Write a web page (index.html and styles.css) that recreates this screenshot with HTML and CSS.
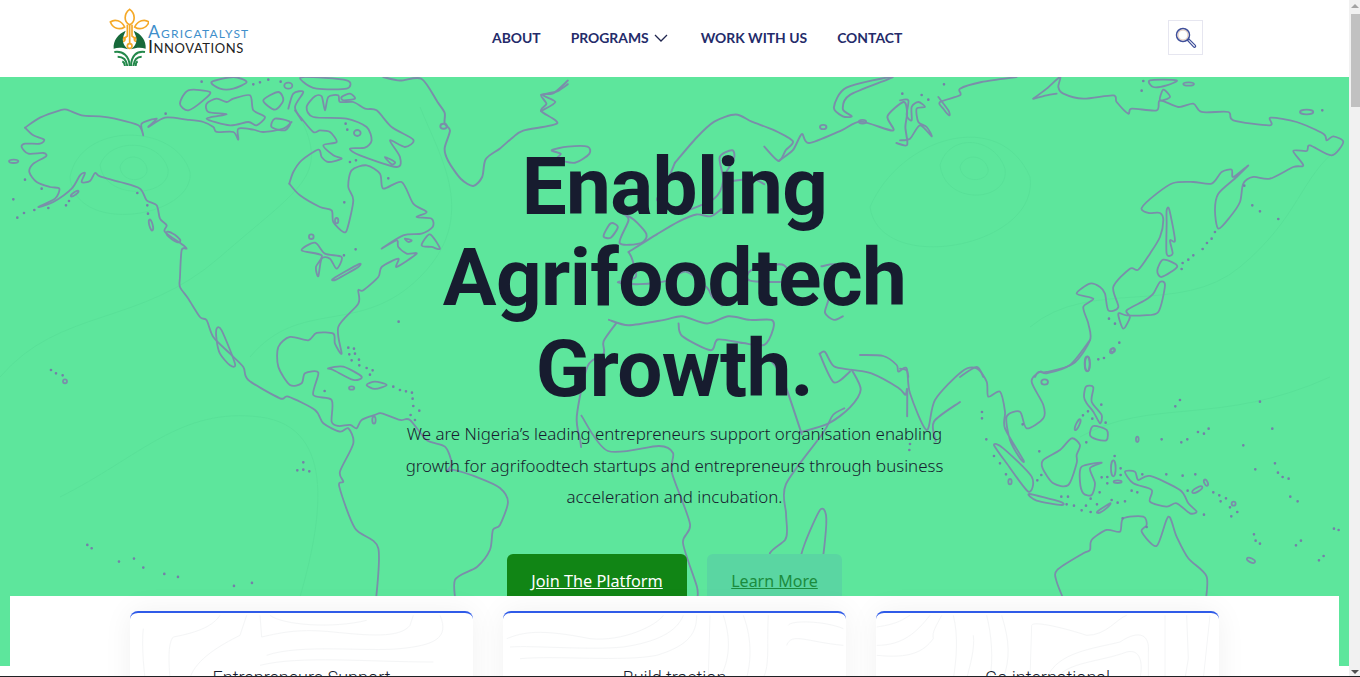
FILE: index.html
```html
<!DOCTYPE html>
<html lang="en">
<head>
<meta charset="UTF-8">
<meta name="viewport" content="width=device-width, initial-scale=1.0">
<title>Agricatalyst Innovations</title>
<link rel="stylesheet" href="styles.css">
</head>
<body>
<div class="window">
<div class="page">

<header class="site-header">
    <a class="logo" href="#">
        <svg class="logo-icon" viewBox="58 28 120 174" width="40" height="58">
            <g fill="none" stroke="#f5a928" stroke-width="5">
                <path d="M120 32C138 45 138 70 120 78C102 70 102 45 120 32Z"/>
                <path d="M62 70C75 60 95 65 105 85C90 95 70 90 62 70Z"/>
                <path d="M178 70C165 60 145 65 135 85C150 95 170 90 178 70Z"/>
                <path d="M113 78V112L100 122M127 78V112L140 122M120 78V135"/>
                <circle cx="120" cy="142" r="7"/>
                <circle cx="100" cy="122" r="6"/>
                <circle cx="140" cy="122" r="6"/>
            </g>
            <path fill="#17693a" d="M72 150C70 125 85 106 108 96L100 116C97 131 105 145 116 152C103 147 86 145 72 150Z"/>
            <path fill="#17693a" d="M168 150C170 125 155 106 132 96L140 116C143 131 135 145 124 152C137 147 154 145 168 150Z"/>
            <g fill="none" stroke="#23884a" stroke-width="6">
                <path d="M74 160C100 156 119 172 120 202"/>
                <path d="M84 174C102 174 111 186 113 202"/>
                <path d="M98 188C103 190 105 196 106 202"/>
                <path d="M166 160C140 156 125 172 124 202"/>
                <path d="M156 174C140 174 133 186 131 202"/>
                <path d="M144 188C139 190 138 196 138 202"/>
            </g>
        </svg>
        <span class="logo-text">
            <span class="logo-top">Agricatalyst</span>
            <span class="logo-bottom">Innovations</span>
        </span>
    </a>
    <nav class="main-nav">
        <a href="#">ABOUT</a>
        <a href="#" class="has-menu">PROGRAMS
            <svg viewBox="0 0 14 8" width="14" height="8"><path d="M1 1L7 7L13 1" fill="none" stroke="#20264f" stroke-width="1.3"/></svg>
        </a>
        <a href="#">WORK WITH US</a>
        <a href="#">CONTACT</a>
    </nav>
    <button class="search-btn" aria-label="Search">
        <svg viewBox="0 0 22 22" width="22" height="22">
            <circle cx="8" cy="8" r="6.5" fill="none" stroke="#3f4f9a" stroke-width="1.5"/>
            <circle cx="8" cy="8" r="5" fill="none" stroke="#d9b9a8" stroke-width=".8"/>
            <path d="M12.6 13.4L14 12L20.4 18.4C21 19 20.6 19.6 20.2 20C19.8 20.4 19.2 20.6 18.8 20.2Z" fill="#fff" stroke="#3f4f9a" stroke-width="1.2"/>
        </svg>
    </button>
</header>

<section class="hero">
    <svg class="hero-map" viewBox="0 0 1349 589" width="1349" height="589">
        <!-- faint contours -->
        <g class="contours">
            <path d="M120 90C125 75 145 78 147 92C148 105 122 108 120 90Z"/>
            <path d="M100 88C110 60 160 62 168 92C172 120 105 125 100 88Z"/>
            <path d="M70 100C80 45 175 45 190 95C195 140 75 160 70 100Z"/>
            <path d="M960 90C965 75 985 78 988 92C990 105 962 108 960 90Z"/>
            <path d="M940 88C950 55 995 60 1005 92C1010 125 945 130 940 88Z"/>
            <path d="M870 130C900 60 1000 30 1030 100C1040 170 880 200 870 130Z"/>
            <path d="M0 300C60 230 140 250 220 180S330 100 300 40"/>
            <path d="M250 280C300 220 360 260 420 200S440 80 420 30"/>
            <path d="M60 420C140 380 180 330 260 340S320 450 300 520"/>
            <path d="M1030 250C1090 200 1180 240 1240 190S1300 100 1340 70"/>
            <path d="M1080 360C1150 320 1220 350 1330 300"/>
        </g>

        <g class="coast" transform="scale(.3333)">
            <!-- north america -->
            <path d="M75 152L120 122L180 100L200 98L245 115L300 118L345 125L415 145L430 175L425 140L470 125L445 150L495 122L560 128L610 135L640 150L650 165L700 165L715 188L715 155L760 158L790 165L850 155L875 135"/>
            <path d="M75 152L100 175L132 188L120 200L75 200L65 210L85 230L130 228L138 238L100 260L88 285L110 315L150 330L178 335L165 365L115 390L160 375L215 335L240 295L255 288L245 315L270 312L285 288L300 298L360 315L420 335L440 370L470 385L480 425L500 445L495 465L550 505L560 515L545 520L540 600L540 630L565 665L600 720L620 730L640 780L690 830L730 870L745 909L840 964L865 959L945 999L970 1039L1020 1064L1045 1054L1060 1099L1020 1184L1030 1214L1018 1229L1065 1354L1135 1414L1125 1600"/>
            <path d="M650 755L665 760L705 860L690 865L660 830L650 790Z"/>
            <path d="M868 320L900 355L960 390L995 400L1000 435L1030 465L1042 455L1060 370L1045 330L1055 280L1100 265L1140 290L1150 335L1205 315L1240 380L1280 405L1250 420L1295 425L1298 450L1265 470L1210 475L1145 515L1190 490L1195 510L1220 530L1250 530L1190 570L1195 545L1145 570L1135 600L1090 640L1075 640L1075 680L1015 750L1025 830L1005 800L1000 770L950 768L925 790L870 780L835 810L835 869L870 924L905 919L915 889L955 887L940 954L995 969L995 1034L1015 1047L1050 1044L1070 1054L1085 1029L1125 1014L1145 1009L1200 1029L1230 1029L1280 1089L1335 1109L1355 1159L1340 1184L1360 1179L1440 1204L1500 1233L1524 1275L1500 1344L1479 1359L1470 1419L1431 1470L1365 1509L1371 1600"/>
            <path d="M868 320L880 285L905 250L955 218L965 240L985 255L1025 245L1000 235L970 205L1010 195L990 165L960 160L940 165L905 125L885 100"/>
            <path d="M905 520L945 497L975 530L1025 540L1010 575L990 545L965 545L955 598L948 570L965 535Z"/>
            <path d="M1000 605L1075 562L1075 570L1010 607Z"/>
            <path d="M920 90L945 58L965 58L975 100L985 60L1015 55L1020 75L1060 75L1095 95L1130 100L1175 150L1240 188L1215 210L1170 190L1200 240L1190 270L1080 235L1050 215L1095 212L1115 190L1100 150L1040 125L940 120Z"/>
            <path d="M620 80L650 65L680 75L700 65L750 55L760 100L795 120L770 145L745 135L690 145L620 125L680 112L625 105Z"/>
            <path d="M540 80L565 40L630 45L610 70L565 100Z"/>
            <path d="M790 70L835 45L850 70L825 98Z"/>
            <path d="M865 95L880 50L910 45L885 90L905 130"/>
            <path d="M815 150L825 125L870 135L855 160Z"/>
            <path d="M635 15L700 0L740 15L700 35L660 35Z"/>
            <path d="M910 0L1040 10L1040 35L950 35L910 15Z"/>
            <path d="M1025 60L1050 50L1065 65L1030 70Z"/>
            <path d="M1155 240L1185 255L1175 262Z"/>
            <path d="M1215 485L1235 490L1225 495Z"/>
            <path d="M1265 505L1290 472L1320 515L1295 510Z"/>
            <path d="M985 874L1030 869L1085 899L1060 909L1000 879Z"/>
            <path d="M1100 924L1125 914L1160 924L1125 936Z"/>
            <ellipse cx="41" cy="253" rx="14" ry="5"/>
            <ellipse cx="224" cy="350" rx="14" ry="4" transform="rotate(-35 224 350)"/>
            <ellipse cx="453" cy="444" rx="5" ry="17" transform="rotate(-15 453 444)"/>
            <ellipse cx="520" cy="480" rx="25" ry="8" transform="rotate(35 520 480)"/>
            <ellipse cx="1010" cy="431" rx="5" ry="8"/>
            <circle cx="934" cy="479" r="7"/>
            <ellipse cx="1072" cy="168" rx="10" ry="9"/>
            <ellipse cx="865" cy="26" rx="12" ry="9"/>
            <ellipse cx="1055" cy="933" rx="8" ry="5"/>
            <ellipse cx="1122" cy="1029" rx="5" ry="11"/>
            <circle cx="195" cy="913" r="6"/>
        </g>

        <g class="coast" transform="translate(400 0) scale(.35714)">
            <!-- greenland, europe, north africa -->
            <path d="M-47 0L0 10L60 5L105 70L125 100L125 130L140 150L125 200L135 235L170 285L205 305L230 280L240 230L280 200L315 170L345 150L440 130L395 95L410 75L395 50L430 45L470 10"/>
            <ellipse cx="122" cy="138" rx="9" ry="7"/>
            <path d="M425 205L470 195L525 195L530 215L490 240L440 230L450 215Z"/>
            <path d="M770 240L830 170L880 125L940 105L985 125L1050 150L1100 180L1080 205L1060 235L1020 195"/>
            <path d="M770 240L740 310L720 345L770 370L800 375L880 340L905 290L895 225L930 205L935 230L905 290L985 285L1020 300"/>
            <path d="M1060 235L1100 205L1125 160L1145 185L1235 150L1290 125L1380 150L1365 110L1410 70L1420 100L1415 140L1420 190L1390 185"/>
            <path d="M1240 110L1215 85L1250 30L1380 0L1260 50L1240 90L1265 110Z"/>
            <ellipse cx="1185" cy="140" rx="9" ry="6"/>
            <ellipse cx="1295" cy="125" rx="10" ry="5"/>
            <path d="M395 95L435 70L400 50L440 40L470 20"/>
            <path d="M570 445L590 410L610 420L590 450Z"/>
            <path d="M615 465L640 400L620 380L655 400L690 440L675 465Z"/>
            <path d="M640 490L720 440L780 405L830 385L870 390L900 370"/>
            <path d="M640 490L650 510L660 560L610 575L670 580L750 570L800 545L860 590L880 620L945 620L900 640"/>
            <path d="M985 540L1070 525L1090 570L980 570Z"/>
            <path d="M1180 530L1220 525L1195 560L1200 620L1190 660L1215 680L1240 670"/>
            <path d="M585 680L640 695L740 680L790 670L860 690L920 670L980 680L1040 680L1045 705L1020 750L960 745L890 735L870 765L790 725L780 690"/>
            <path d="M605 690L570 740L570 775L525 810L495 950L505 1020L507 1036"/>
            <path d="M1175 775L1190 770L1215 810L1265 820L1320 830L1395 870L1415 890L1420 875L1420 950"/>
            <path d="M1175 775L1215 855L1260 825"/>
            <path d="M1120 995L1200 970L1260 925L1290 875L1265 820"/>
            <path d="M1035 790L1070 840L1120 985L1125 1000"/>
            <path d="M1500 1020L1495 965L1568 910"/>
        </g>

        <g class="coast-plain">
            <!-- africa south of the heading -->
            <path d="M581 338L608 374L659 369L673 376L672 396L690 447L683 466L697 510L697 523"/>
            <path d="M845 331L833 338L823 356L786 407L786 436L787 453L785 463L770 476L772 491L760 506L758 523"/>
            <path d="M820 433L805 466L800 486L805 503L820 493L825 463L826 438Z"/>
        </g>

        <g class="coast" transform="translate(900 0) scale(.3333)">
            <!-- asia -->
            <path d="M0 70L25 70L20 115L35 130L35 90L55 75L75 90L50 95L55 135L80 150L95 178L60 145L30 185L0 190"/>
            <path d="M115 60L145 100L148 115L130 95L120 75L180 55L180 35L245 15L350 0"/>
            <path d="M400 65L440 35L480 0L475 30L490 50L550 65L640 55L650 75L685 110L695 95L770 100L780 70L835 90L880 80L905 105L985 105L1000 130L1110 145L1112 122L1190 135L1270 170L1280 190L1300 178L1330 195L1295 235L1230 205L1220 222L1180 222L1210 265L1180 270L1110 305L1060 300L1030 320L1020 375L990 420L955 455L945 400L955 350L1010 300L1045 265L1000 300L995 278L965 285L935 320L880 315L820 318L770 350L725 393L745 408L780 408L790 430L780 480L750 530L715 578L690 575L640 630L655 690L625 700L615 650L600 630L570 620L530 650L580 665L550 690L565 740L570 790L520 860L440 885L415 885L405 900"/>
            <path d="M400 65L440 55L470 50"/>
            <path d="M800 400L808 398L825 490L810 490L818 530L800 530L800 440Z"/>
            <path d="M790 548L832 568L785 600L772 580Z"/>
            <path d="M780 615L795 625L775 705L730 715L680 715L655 710L670 755L690 720L680 700L735 670L760 650Z"/>
            <path d="M750 10L830 10L800 25L760 30Z"/>
            <path d="M780 70L790 38L810 60Z"/>
            <ellipse cx="1220" cy="105" rx="20" ry="7"/>
            <ellipse cx="866" cy="21" rx="16" ry="5"/>
            <ellipse cx="562" cy="860" rx="8" ry="22"/>
            <ellipse cx="638" cy="820" rx="7" ry="5"/>
            <path d="M180 900L230 870L250 900"/>
            <path d="M0 875L20 880L25 900"/>
        </g>

        <g class="coast" transform="translate(860 263) scale(.3333)">
            <!-- south east asia and australia -->
            <path d="M0 45L70 48L110 75L115 95L140 85L150 160L200 270L225 180L305 95L350 85L380 125L385 170L420 155L435 215L435 265L490 360L480 355L450 300L440 230L480 215L500 265L550 235L550 195L515 125L540 95L560 100L630 75L690 0"/>
            <path d="M402 315L430 325L515 410L505 455L440 370Z"/>
            <path d="M508 462L600 485L605 495L530 482Z"/>
            <path d="M635 295L660 315L650 345L650 370L625 435L580 430L548 385L550 360L600 330Z"/>
            <path d="M665 380L725 368L690 385L705 430L695 465L670 460L660 425Z"/>
            <path d="M678 140L700 142L695 185L725 225L720 250L700 215L680 190L672 170Z"/>
            <path d="M700 258L740 270L740 300L710 298L690 285Z"/>
            <path d="M795 395L825 395L835 420L870 408L960 450L985 490L1010 515L990 520L950 490L920 500L870 485L875 450L820 430Z"/>
            <path d="M620 800L590 725L592 690L670 640L690 630L695 600L740 570L780 575L790 535L850 530L860 555L845 575L890 618L925 530L950 590L985 655L1040 710L1035 800"/>
            <path d="M712 515L750 490L745 500L720 518Z"/>
            <ellipse cx="554" cy="126" rx="10" ry="8"/>
            <ellipse cx="682" cy="72" rx="7" ry="22"/>
            <ellipse cx="653" cy="254" rx="5" ry="18" transform="rotate(25 653 254)"/>
            <ellipse cx="760" cy="385" rx="7" ry="24"/>
            <ellipse cx="773" cy="425" rx="12" ry="4"/>
            <ellipse cx="450" cy="425" rx="5" ry="8"/>
            <ellipse cx="1012" cy="449" rx="17" ry="6" transform="rotate(-30 1012 449)"/>
            <ellipse cx="1038" cy="428" rx="5" ry="10" transform="rotate(-25 1038 428)"/>
            <ellipse cx="1173" cy="661" rx="13" ry="6" transform="rotate(25 1173 661)"/>
            <ellipse cx="832" cy="298" rx="4" ry="8"/>
            <ellipse cx="1121" cy="491" rx="6" ry="6"/>
            <ellipse cx="757" cy="32" rx="5" ry="9" transform="rotate(35 757 32)"/>
        </g>

        <!-- island dots -->
        <g class="dots" transform="scale(.3333)">
            <path d="M497 110h0M75 308h0M125 335h0M40 367h0M52 422h0M72 408h0M103 399h0M145 393h0M198 385h0M207 372h0M412 348h0M442 385h0M444 410h0M1165 304h0M1067 517h0M1032 535h0M1196 734h0M1037 140h0M1042 158h0M1050 255h0M1068 250h0M1033 376h0M605 14h0M760 22h0M780 16h0M805 8h0M842 14h0"/>
            <path d="M1045 812h0M1062 815h0M1048 832h0M1065 830h0M1055 850h0M1077 848h0M1078 865h0M1100 873h0M1118 880h0M1110 893h0"/>
            <path d="M153 879h0M168 889h0M188 895h0M1180 929h0M1200 939h0M1218 943h0M1236 947h0M1238 965h0M1240 987h0M1258 1001h0M1232 1014h0M1245 1029h0M974 942h0M910 1156h0M892 1180h0M910 1178h0M928 1183h0"/>
            <path d="M262 1404h0M275 1414h0M357 1454h0M402 1445h0M430 1472h0M493 1491h0M534 1500h0M702 1527h0M756 1518h0"/>
        </g>
        <g class="dots" transform="translate(900 0) scale(.3333)">
            <path d="M132 22h0M65 54h0M85 68h0M7 50h0M730 12h0M725 41h0M1267 100h0M1057 385h0M1080 403h0M1135 426h0M945 465h0M935 485h0M921 498h0M908 516h0M880 535h0M865 548h0M848 558h0M845 576h0M1033 326h0M627 725h0M645 740h0M658 797h0M612 843h0M595 847h0"/>
        </g>
        <g class="dots" transform="translate(860 263) scale(.3333)">
            <path d="M366 216h0M366 235h0M379 298h0M402 348h0M420 370h0M438 403h0M488 253h0M538 334h0M544 405h0M532 421h0M150 312h0M148 330h0M724 194h0M684 214h0M669 226h0M697 236h0M737 248h0M679 307h0M764 348h0M782 385h0M782 405h0M847 403h0M919 403h0M968 407h0M1006 403h0M725 412h0M742 411h0M742 430h0M719 457h0M692 476h0M604 470h0M624 470h0M620 493h0M642 497h0M678 497h0M665 511h0M692 516h0M711 493h0M755 480h0M773 488h0M795 484h0M815 452h0M832 457h0M983 452h0M1060 457h0M1078 466h0M1098 475h0M1082 484h0M1110 502h0M1132 516h0M1114 529h0M1032 524h0M860 561h0M788 535h0M960 180h0M946 199h0M1200 185h0M1237 266h0M1046 266h0M1032 281h0M1014 276h0M982 298h0M964 307h0M905 298h0M1150 316h0M1186 388h0M1245 370h0M1254 398h0M1268 411h0M1286 416h0M1291 470h0M1313 484h0M1182 583h0M1187 602h0M1200 611h0M1308 616h0M1323 602h0M1391 648h0M1377 661h0M1422 566h0M1436 570h0"/>
        </g>
    </svg>

    <div class="hero-inner">
        <h1>Enabling<br>Agrifoodtech<br>Growth.</h1>
        <p>We are Nigeria’s leading entrepreneurs support organisation enabling growth for agrifoodtech startups and entrepreneurs through business acceleration and incubation.</p>
        <div class="hero-btns">
            <a class="btn btn-join" href="#">Join The Platform</a>
            <a class="btn btn-learn" href="#">Learn More</a>
        </div>
    </div>
</section>

<section class="cards-panel">
    <div class="card">
        <svg class="card-lines" viewBox="390 243 1029 300" preserveAspectRatio="none">
            <path d="M430 290C425 330 430 400 435 437"/>
            <path d="M510 437C505 380 505 330 520 315C600 300 640 280 660 250"/>
            <path d="M570 437C590 380 660 340 720 310L740 250"/>
            <path d="M780 250L785 315C850 300 900 290 1000 300C1100 310 1200 320 1230 280L1240 250"/>
            <path d="M810 250C850 280 1000 290 1100 265"/>
            <path d="M800 370C900 335 1100 360 1200 350C1300 340 1350 320 1320 250"/>
            <path d="M780 400C900 370 1100 390 1300 390"/>
        </svg>
        <h3>Entrepreneurs Support</h3>
    </div>
    <div class="card">
        <svg class="card-lines" viewBox="39 243 1029 300" preserveAspectRatio="none">
            <path d="M50 320C100 300 150 290 300 320C400 330 500 280 520 250"/>
            <path d="M60 345C130 340 300 355 400 345C500 330 560 300 580 250"/>
            <path d="M90 380C200 370 400 390 500 370C600 340 620 300 620 250"/>
            <path d="M660 250L655 437"/>
            <path d="M700 250C730 340 710 400 690 437"/>
            <path d="M760 250C790 330 780 400 770 437"/>
            <path d="M835 250C830 330 840 400 820 437"/>
            <path d="M895 280C900 265 1000 265 1060 290"/>
            <path d="M890 340C905 300 950 330 1060 340"/>
        </svg>
        <h3>Build traction</h3>
    </div>
    <div class="card">
        <svg class="card-lines" viewBox="48 63 1029 300" preserveAspectRatio="none">
            <path d="M50 105C120 95 130 80 150 70"/>
            <path d="M50 160C130 160 170 120 210 70"/>
            <path d="M50 190C150 200 190 180 220 140C215 120 230 100 245 70"/>
            <path d="M280 70C295 130 290 200 280 260"/>
            <path d="M340 130C345 170 330 220 320 260"/>
            <path d="M380 70C395 130 400 200 390 260"/>
            <path d="M425 70C450 150 450 200 430 260"/>
            <path d="M515 100C520 85 620 110 680 130C740 130 770 80 800 70"/>
            <path d="M515 100L510 260"/>
            <path d="M560 260C590 180 700 170 780 150C840 110 870 130 865 180L865 260"/>
            <path d="M590 260C620 210 720 210 800 180C840 170 850 210 840 260"/>
            <path d="M915 70L915 260"/>
            <path d="M980 70L985 200L975 260"/>
            <path d="M1050 70L1030 260"/>
        </svg>
        <h3>Go international</h3>
    </div>
</section>

</div>
<div class="scrollbar">
    <span class="arrow-up"></span>
    <span class="thumb"></span>
    <span class="arrow-down"></span>
</div>
</div>
<script src="map.js"></script>
</body>
</html>
```

FILE: map.js
```js
// round off the coastlines, they are stored as plain point lists
document.querySelectorAll('.coast path, .coast-plain path').forEach(function(path) {
    const d = path.getAttribute('d');
    const closed = d.endsWith('Z');
    const pts = d.replace(/[MZ]/g, '').split('L').map(function(p) {
        return p.trim().split(' ').map(Number);
    });
    const n = pts.length;
    const at = function(i) {
        if (closed) return pts[(i + n) % n];
        return pts[Math.max(0, Math.min(n - 1, i))];
    };
    let out = 'M' + pts[0].join(' ');
    const last = closed ? n : n - 1;
    for (let i = 0; i < last; i++) {
        const p0 = at(i - 1), p1 = at(i), p2 = at(i + 1), p3 = at(i + 2);
        const k = 0.14;
        out += 'C' + (p1[0] + (p2[0] - p0[0]) * k) + ' ' + (p1[1] + (p2[1] - p0[1]) * k) + ' ' +
            (p2[0] - (p3[0] - p1[0]) * k) + ' ' + (p2[1] - (p3[1] - p1[1]) * k) + ' ' +
            p2[0] + ' ' + p2[1];
    }
    path.setAttribute('d', closed ? out + 'Z' : out);
});
```

FILE: styles.css
```css
html, body {
    margin: 0;
    height: 100%;
    overflow: hidden;
    background: #fff;
    font-family: "Noto Sans", sans-serif;
}
.window {
    display: flex;
    height: 676px;
    border-bottom: 1px solid #202124;
    overflow: hidden;
}
.page {
    flex: 1;
    min-width: 0;
    overflow: hidden;
}

/* header */
.site-header {
    display: flex;
    align-items: center;
    height: 77px;
    padding: 0 146px 0 110px;
    box-sizing: border-box;
}
.logo {
    display: flex;
    align-items: flex-start;
    width: 140px;
    height: 58px;
    margin-top: -3px;
    text-decoration: none;
}
.logo-icon {
    flex: none;
    margin-left: -1px;
}
.logo-text {
    display: flex;
    flex-direction: column;
    margin: 17px 0 0 -1px;
    font-family: Lato, sans-serif;
    font-variant: small-caps;
    line-height: 14px;
    white-space: nowrap;
}
.logo-top {
    font-size: 17.5px;
    letter-spacing: 1.2px;
    color: #3f8fcb;
}
.logo-bottom {
    font-size: 18px;
    letter-spacing: .55px;
    color: #222;
}
.main-nav {
    display: flex;
    align-items: center;
    gap: 30px;
    margin: -2px 0 0 242px;
}
.main-nav a {
    display: flex;
    align-items: center;
    gap: 5px;
    font-family: Lato, sans-serif;
    font-size: 13.9px;
    font-weight: 700;
    color: #242b6a;
    text-decoration: none;
    white-space: nowrap;
}
.main-nav .has-menu {
    margin-right: 3px;
}
.search-btn {
    display: flex;
    align-items: center;
    justify-content: center;
    width: 35px;
    height: 35px;
    margin: -2px 0 0 auto;
    padding: 0;
    background: #fff;
    border: 1px solid #e6e6f0;
}

/* hero */
.hero {
    position: relative;
    height: 589px;
    background: #5de69c;
    overflow: hidden;
}
.hero-map {
    position: absolute;
    top: 0;
    left: 0;
    filter: blur(.5px);
}
.coast {
    fill: none;
    stroke: #7a8eaa;
    stroke-width: 5.4;
    stroke-linejoin: round;
    stroke-linecap: round;
}
.coast-plain {
    fill: none;
    stroke: #7a8eaa;
    stroke-width: 1.8;
    stroke-linejoin: round;
}
.dots {
    fill: none;
    stroke: #7480a8;
    stroke-width: 8;
    stroke-linecap: round;
}
.contours {
    fill: none;
    stroke: #59e098;
    stroke-width: 1;
}
.hero-inner {
    position: relative;
    display: flex;
    flex-direction: column;
    align-items: center;
    padding-top: 65px;
    text-align: center;
}
.hero h1 {
    margin: 0;
    font-family: Roboto, sans-serif;
    font-size: 80px;
    font-weight: 700;
    line-height: 91px;
    letter-spacing: -.6px;
    color: #171c2f;
}
.hero p {
    width: 560px;
    margin: 3px 0 0;
    font-size: 16.9px;
    font-weight: 300;
    line-height: 31.5px;
    color: #171c2f;
}
.hero-btns {
    display: flex;
    gap: 20px;
    margin-top: 41px;
}
.btn {
    display: block;
    height: 62px;
    box-sizing: border-box;
    padding-top: 16px;
    border-radius: 6px;
    text-decoration: underline;
}
.btn-join {
    width: 180px;
    background: #118515;
    color: #fff;
    font-size: 16.25px;
}
.btn-learn {
    width: 135px;
    background: #5ad6a2;
    color: #1b8c3e;
    font-size: 16px;
}

/* cards */
.cards-panel {
    position: relative;
    display: grid;
    grid-template-columns: repeat(3, 343px);
    gap: 30px;
    height: 120px;
    margin: -70px 10px 0;
    padding: 15px 0 0 120px;
    background: #fff;
}
.card {
    position: relative;
    height: 200px;
    box-sizing: border-box;
    padding-top: 53px;
    background: #fff;
    border-top: 2px solid #2f5be8;
    border-radius: 8px;
    box-shadow: 0 0 30px rgba(0, 0, 0, .06);
    text-align: center;
}
.card-lines {
    position: absolute;
    top: 0;
    left: 0;
    width: 343px;
    height: 100px;
    fill: none;
    stroke: #f4f5f6;
    stroke-width: 3;
}
.card h3 {
    position: relative;
    margin: 0;
    font-family: Roboto, sans-serif;
    font-size: 18px;
    font-weight: 300;
    line-height: 24px;
    color: #171c2f;
}

/* scrollbar */
.scrollbar {
    display: flex;
    flex-direction: column;
    align-items: flex-end;
    flex: none;
    width: 11px;
    background: #f1f1f1;
}
.thumb {
    display: block;
    width: 9px;
    height: 93px;
    background: #c1c1c1;
}
.arrow-up, .arrow-down {
    display: block;
    width: 0;
    height: 0;
    border-left: 4px solid transparent;
    border-right: 4px solid transparent;
}
.arrow-up {
    margin: 4px 1px 6px 0;
    border-bottom: 4px solid #a3a3a3;
}
.arrow-down {
    margin: auto 1px 2px 0;
    border-top: 4px solid #505050;
}
```
